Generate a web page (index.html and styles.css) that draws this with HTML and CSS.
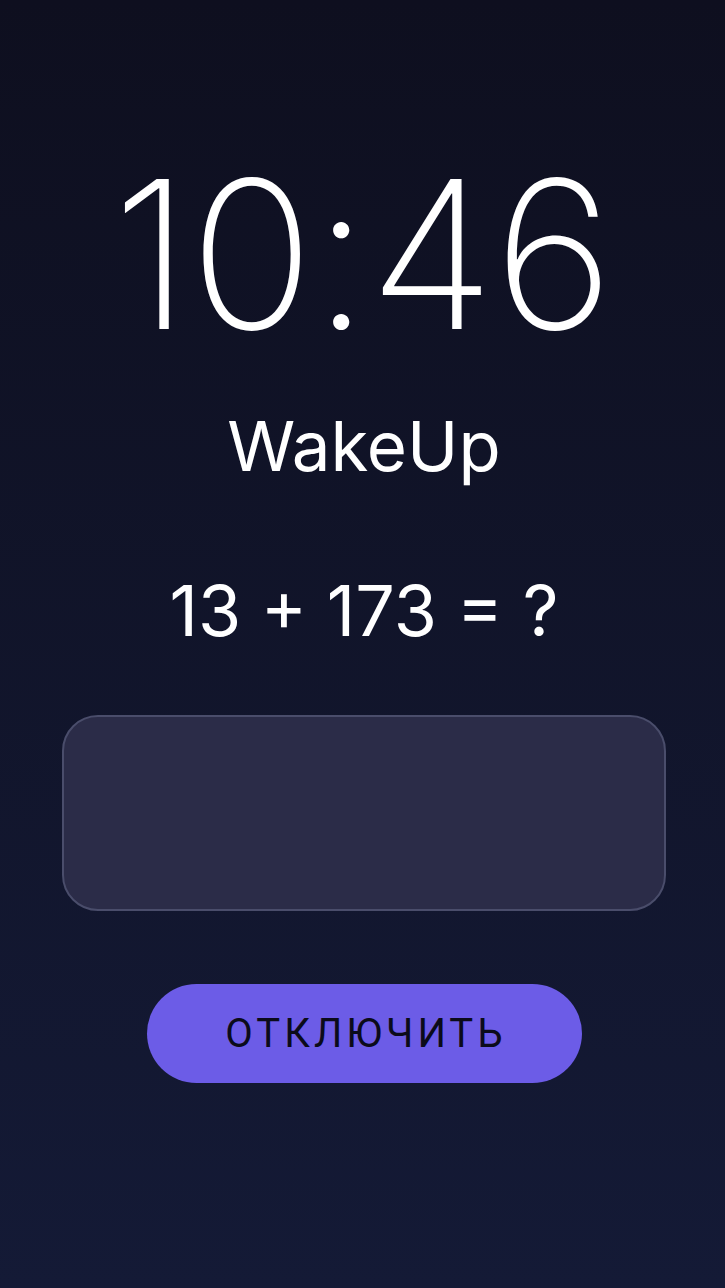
FILE: index.html
```html
<!DOCTYPE html>
<html>
<head>
    <title>WakeUp</title>
    <link rel="stylesheet" href="styles.css">
</head>
<body>
    <div class="alarm-screen">
        <div class="alarm-time">10:46</div>
        <div class="alarm-label">WakeUp</div>
        <div class="alarm-task">13 + 173 = ?</div>
        <input type="text" class="answer-input" inputmode="numeric">
        <button class="dismiss-button">ОТКЛЮЧИТЬ</button>
    </div>
</body>
</html>
```

FILE: styles.css
```css
body {
    margin: 0;
    padding: 0;
    min-height: 100vh;
    font-family: Inter, "Noto Sans", sans-serif;
    color: #fff;
    background: linear-gradient(180deg, #0e0f1f 0%, #141a36 100%);
}

.alarm-screen {
    display: flex;
    flex-direction: column;
    align-items: center;
    padding: 151px 0 0 3px;
}

.alarm-time {
    margin-right: 3px;
    font-size: 206px;
    font-weight: 250;
    line-height: 206px;
    letter-spacing: -1px;
}

.alarm-label {
    margin-top: 44px;
    font-size: 69px;
    font-weight: 400;
    line-height: 90px;
}

.alarm-task {
    margin-top: 75px;
    font-size: 70px;
    font-weight: 400;
    line-height: 90px;
}

.answer-input {
    box-sizing: border-box;
    width: 604px;
    height: 196px;
    margin-top: 59px;
    background-color: #2b2c48;
    border: 2px solid #4a4d6b;
    border-radius: 36px;
    color: #fff;
    font-size: 60px;
    text-align: center;
    outline: none;
}

.dismiss-button {
    width: 435px;
    height: 99px;
    margin-top: 73px;
    background-color: #6c5ce7;
    color: #0b0b1a;
    border: none;
    border-radius: 50px;
    font-family: Roboto, sans-serif;
    font-size: 40px;
    letter-spacing: 4px;
    text-indent: 4px;
    cursor: pointer;
}
```
